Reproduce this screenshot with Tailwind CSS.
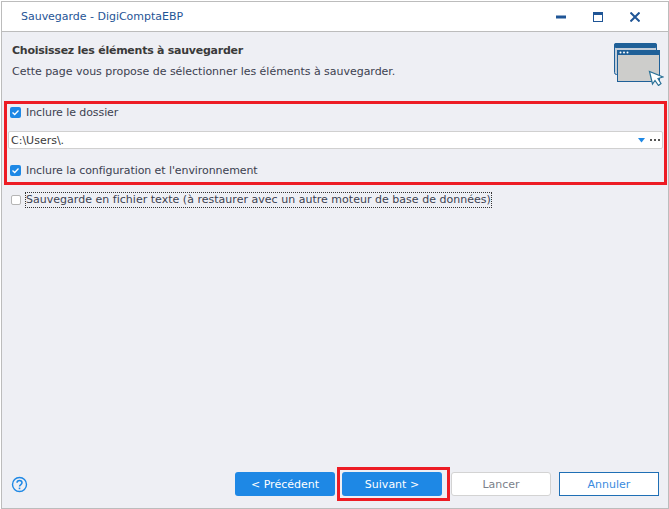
<!DOCTYPE html>
<html lang="fr">
<head>
  <meta charset="UTF-8">
  <title>Sauvegarde - DigiComptaEBP</title>
  <script src="https://cdn.jsdelivr.net/npm/@tailwindcss/browser@4"></script>
</head>
<body class="bg-white w-[669px] h-[509px] overflow-hidden font-['DejaVu_Sans',sans-serif] text-[11px] text-[#3c4150]">
  <div class="w-[669px] h-[509px] pl-px pt-px">
    <div class="w-[668px] h-[508px] flex flex-col border border-[#bcbcbc]">
      <!-- barre de titre -->
      <div class="h-[30px] shrink-0 bg-white border-b border-[#bcbcbc] flex items-center pl-[19px] pr-[28px] text-[#1f5596]">
        <span class="pt-[2px] tracking-[-0.02px]">Sauvegarde - DigiComptaEBP</span>
        <div class="ml-auto flex items-center gap-[27px]">
          <svg width="10" height="4" viewBox="0 0 10 4"><rect y="0.5" width="10" height="3" fill="#1f5596"/></svg>
          <svg width="10" height="10" viewBox="0 0 10 10"><rect x="0.5" y="0.5" width="9" height="9" fill="none" stroke="#1f5596"/><rect width="10" height="3" fill="#1f5596"/></svg>
          <svg width="10" height="10" viewBox="0 0 10 10"><path d="M0.500 0.500 9.500 9.500M9.500 0.500 0.500 9.500" stroke="#1f5596" stroke-width="2" fill="none"/></svg>
        </div>
      </div>

      <div class="flex-1 flex flex-col bg-[#eeeff4] min-h-0">
        <!-- en-tête -->
        <div class="h-[69px] shrink-0 flex pl-[10px] pr-[4px] pt-[10px]">
          <div>
            <div class="font-bold leading-[18px] text-[#3a3a3a] tracking-[-0.25px]">Choisissez les éléments à sauvegarder</div>
            <div class="leading-[18px] mt-[3px] tracking-[-0.03px]">Cette page vous propose de sélectionner les éléments à sauvegarder.</div>
          </div>
          <svg class="ml-auto mt-[1px]" width="50" height="43" viewBox="0 0 50 43">
            <rect x="0.500" y="0.500" width="42" height="31" rx="2" fill="#c3cdd8" stroke="#1f6098"/>
            <rect x="0" y="0" width="43" height="5" rx="2" fill="#1f6098"/>
            <rect x="3.500" y="7.500" width="42" height="31" fill="#cdcdcb" stroke="#1f6098"/>
            <rect x="3" y="7" width="43" height="5" fill="#1f6098"/>
            <circle cx="6.500" cy="9.500" r="1" fill="#fff"/><circle cx="10" cy="9.500" r="1" fill="#fff"/><circle cx="13.500" cy="9.500" r="1" fill="#fff"/>
            <path d="M35.500 28.500 38.500 41 41 37.500 44.500 42.500 47 40.500 44 35.500 49 34Z" fill="#fff" stroke="#2a7197" stroke-width="1.200"/>
          </svg>
        </div>

        <!-- zone encadrée -->
        <div class="ml-[2px] mr-[1px] h-[84px] shrink-0 border-[3px] border-[#ed1c24] pl-[3px] pr-[1px] flex flex-col">
          <label class="h-[16px] flex items-center gap-[5px] tracking-[-0.08px]">
            <span class="w-[11px] h-[11px] rounded-[2px] bg-[#1e88e5] flex items-center justify-center">
              <svg width="9" height="9" viewBox="0 0 9 9"><path d="M1.500 4.500 3.700 6.500 7.500 2.500" stroke="#fff" stroke-width="1.300" fill="none"/></svg>
            </span>
            <span class="pt-[2px]">Inclure le dossier</span>
          </label>
          <div class="h-[18px] -ml-[2px] mt-[11px] bg-white border border-[#d0d0d0] rounded-[2px] flex items-center pl-[2px] pr-[2px]">
            <span class="pt-[2px] text-[#3a3a3a]">C:\Users\.</span>
            <svg class="ml-auto" width="7" height="5" viewBox="0 0 7 5"><path d="M0 0H7L3.500 4.500Z" fill="#1e88e5"/></svg>
            <span class="flex gap-[2px] ml-[5px]">
              <span class="w-[2px] h-[2px] bg-[#555]"></span><span class="w-[2px] h-[2px] bg-[#555]"></span><span class="w-[2px] h-[2px] bg-[#555]"></span>
            </span>
          </div>
          <label class="h-[18px] mt-[12px] flex items-center gap-[5px] tracking-[-0.08px]">
            <span class="w-[11px] h-[11px] rounded-[2px] bg-[#1e88e5] flex items-center justify-center">
              <svg width="9" height="9" viewBox="0 0 9 9"><path d="M1.500 4.500 3.700 6.500 7.500 2.500" stroke="#fff" stroke-width="1.300" fill="none"/></svg>
            </span>
            <span class="pt-[2px]">Inclure la configuration et l'environnement</span>
          </label>
        </div>

        <label class="mt-[7px] ml-[9px] h-[16px] flex items-center gap-[4px]">
          <span class="w-[10px] h-[10px] rounded-[2px] bg-white border border-[#b5b5b5]"></span>
          <span class="h-[16px] border border-dotted border-[#333] leading-[14px] tracking-[0.02px]">Sauvegarde en fichier texte (à restaurer avec un autre moteur de base de données)</span>
        </label>

        <!-- pied -->
        <div class="mt-auto h-[41px] shrink-0 flex items-start pl-[9px] pr-[9px]">
          <svg class="mt-[9px]" width="17" height="17" viewBox="0 0 17 17">
            <circle cx="8.500" cy="8.500" r="7" fill="none" stroke="#1e88e5" stroke-width="1.400"/>
            <path d="M6 6.800C6 3.800 11 3.800 11 6.800 11 8.600 8.500 8.500 8.500 10.600" fill="none" stroke="#1e88e5" stroke-width="1.500"/>
            <rect x="7.700" y="11.600" width="1.600" height="1.600" fill="#1e88e5"/>
          </svg>
          <button class="ml-auto mt-[5px] w-[100px] h-[24px] pt-[2px] bg-[#1e88e5] rounded-[3px] text-white">&lt; Précédent</button>
          <div class="ml-[2px] border-[3px] border-[#ed1c24] w-[113px] h-[34px] pl-[2px] pt-[2px]">
            <button class="block w-[100px] h-[24px] pt-[2px] bg-[#1e88e5] rounded-[3px] text-white">Suivant &gt;</button>
          </div>
          <button class="ml-[1px] mt-[5px] w-[100px] h-[24px] pt-[2px] bg-white border border-[#d3d3d3] rounded-[3px] text-[#7b7f8a]">Lancer</button>
          <button class="ml-[8px] mt-[5px] w-[100px] h-[24px] pt-[2px] bg-white border border-[#1f6fb5] text-[#3a8be0]">Annuler</button>
        </div>
      </div>
    </div>
  </div>
</body>
</html>
